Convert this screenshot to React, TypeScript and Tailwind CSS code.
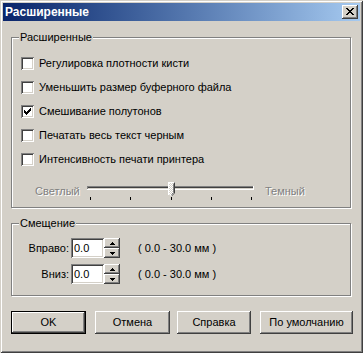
import React from "react";

const RAISED =
  "shadow-[inset_-1px_-1px_#404040,inset_1px_1px_#ffffff,inset_-2px_-2px_#808080,inset_2px_2px_#d4d0c8]";

function Check({ checked }: { checked?: boolean }) {
  return (
    <div className="relative w-[13px] h-[13px] shrink-0 bg-white shadow-[inset_1px_1px_#808080,inset_-1px_-1px_#ffffff,inset_2px_2px_#404040,inset_-2px_-2px_#d4d0c8]">
      {checked && (
        <svg
          className="absolute left-[3px] top-[3px]"
          width="7"
          height="7"
          viewBox="0 0 7 7"
          shapeRendering="crispEdges"
        >
          <path
            d="M0 2h1v3H0z M1 3h1v3H1z M2 4h1v3H2z M3 3h1v3H3z M4 2h1v3H4z M5 1h1v3H5z M6 0h1v3H6z"
            fill="#000"
          />
        </svg>
      )}
    </div>
  );
}

function Row({ text, checked }: { text: string; checked?: boolean }) {
  return (
    <div className="flex items-center h-[13px] gap-[5px]">
      <Check checked={checked} />
      <span className="whitespace-nowrap">{text}</span>
    </div>
  );
}

function Slider() {
  const ticks = [3, 43, 84, 124, 164];
  return (
    <svg width="170" height="22" viewBox="0 0 170 22" shapeRendering="crispEdges">
      <rect x="0" y="6" width="166" height="1" fill="#808080" />
      <rect x="0" y="6" width="1" height="3" fill="#808080" />
      <rect x="1" y="7" width="165" height="1" fill="#404040" />
      <rect x="1" y="8" width="165" height="1" fill="#d4d0c8" />
      <rect x="0" y="9" width="167" height="1" fill="#ffffff" />
      <rect x="166" y="6" width="1" height="4" fill="#ffffff" />
      {ticks.map((t) => (
        <rect key={t} x={t} y="17" width="1" height="3" fill="#000" />
      ))}
      <defs>
        <pattern id="dith" width="2" height="2" patternUnits="userSpaceOnUse">
          <rect width="2" height="2" fill="#ffffff" />
          <rect x="0" y="0" width="1" height="1" fill="#d4d0c8" />
          <rect x="1" y="1" width="1" height="1" fill="#d4d0c8" />
        </pattern>
      </defs>
      <polygon points="81,2 88,2 88,13 84.5,16.5 81,13" fill="url(#dith)" />
      <polyline points="81.5,15 81.5,2.5 87.5,2.5" fill="none" stroke="#ffffff" strokeWidth="1" />
      <polyline points="87.5,2.5 87.5,13 84.5,16" fill="none" stroke="#404040" strokeWidth="1" shapeRendering="auto" />
      <polyline points="86.5,3.5 86.5,12.5 84.5,14.5" fill="none" stroke="#808080" strokeWidth="1" shapeRendering="auto" />
      <polyline points="81.5,13 84.5,16" fill="none" stroke="#ffffff" strokeWidth="1" shapeRendering="auto" />
    </svg>
  );
}

function Spin({ value }: { value: string }) {
  return (
    <div className="flex h-[20px]">
      <div className="w-[33px] h-[20px] bg-white pl-[3px] flex items-center shadow-[inset_1px_1px_#808080,inset_-1px_-1px_#ffffff,inset_2px_2px_#404040,inset_-2px_-2px_#d4d0c8]">
        {value}
      </div>
      <div className="flex flex-col w-[16px] h-[20px]">
        <div className={`h-[10px] bg-[#d4d0c8] flex items-center justify-center ${RAISED}`}>
          <svg width="5" height="3" viewBox="0 0 5 3" shapeRendering="crispEdges">
            <path d="M2 0h1v1H2z M1 1h3v1H1z M0 2h5v1H0z" fill="#000" />
          </svg>
        </div>
        <div className={`h-[10px] bg-[#d4d0c8] flex items-center justify-center ${RAISED}`}>
          <svg width="5" height="3" viewBox="0 0 5 3" shapeRendering="crispEdges">
            <path d="M0 0h5v1H0z M1 1h3v1H1z M2 2h1v1H2z" fill="#000" />
          </svg>
        </div>
      </div>
    </div>
  );
}

function Btn({ children, className }: { children: React.ReactNode; className?: string }) {
  return (
    <div className={`h-[23px] bg-[#d4d0c8] flex items-center justify-center ${RAISED} ${className ?? ""}`}>
      {children}
    </div>
  );
}

export default function App() {
  return (
    <div className="w-[363px] h-[353px] bg-[#d4d0c8] p-[3px] flex flex-col text-[11px] leading-[13px] text-black font-['Liberation_Sans',Arial,sans-serif] shadow-[inset_1px_1px_#d4d0c8,inset_-1px_-1px_#404040,inset_2px_2px_#ffffff,inset_-2px_-2px_#808080]">
      {/* Title bar */}
      <div className="h-[18px] shrink-0 flex items-center justify-between pl-[2px] pr-[2px] bg-linear-to-r from-[#0a246a] to-[#a6caf0]">
        <span className="text-white font-bold text-[12px] leading-[14px]">Расширенные</span>
        <div className={`w-[16px] h-[14px] bg-[#d4d0c8] pl-[4px] pt-[3px] ${RAISED}`}>
          <svg width="8" height="7" viewBox="0 0 8 7" shapeRendering="crispEdges" className="block">
            <path
              d="M0 0h2v1H0z M6 0h2v1H6z M1 1h2v1H1z M5 1h2v1H5z M2 2h4v1H2z M3 3h2v1H3z M2 4h4v1H2z M1 5h2v1H1z M5 5h2v1H5z M0 6h2v1H0z M6 6h2v1H6z"
              fill="#000"
            />
          </svg>
        </div>
      </div>

      {/* Group 1 */}
      <div className="relative shrink-0 mt-[16px] ml-[8px] w-[340px] h-[171px] border border-[#808080] shadow-[inset_1px_1px_#ffffff,1px_1px_#ffffff] pl-[9px] pt-[19px]">
        <span className="absolute left-[7px] top-[-7px] px-[1px] bg-[#d4d0c8]">Расширенные</span>
        <div className="flex flex-col gap-[11px]">
          <Row text="Регулировка плотности кисти" />
          <Row text="Уменьшить размер буферного файла" />
          <Row text="Смешивание полутонов" checked />
          <Row text="Печатать весь текст черным" />
          <Row text="Интенсивность печати принтера" />
        </div>
        <div className="flex items-center mt-[14px] ml-[14px]">
          <span className="w-[52px] text-[#808080] [text-shadow:1px_1px_0_#ffffff]">Светлый</span>
          <Slider />
          <span className="ml-[8px] text-[#808080] [text-shadow:1px_1px_0_#ffffff]">Темный</span>
        </div>
      </div>

      {/* Group 2 */}
      <div className="relative shrink-0 mt-[15px] ml-[8px] w-[340px] h-[73px] border border-[#808080] shadow-[inset_1px_1px_#ffffff,1px_1px_#ffffff] pl-[12px] pt-[14px] flex flex-col gap-[6px]">
        <span className="absolute left-[7px] top-[-7px] px-[1px] bg-[#d4d0c8]">Смещение</span>
        <div className="flex items-center h-[20px]">
          <span className="w-[45px] text-right">Вправо:</span>
          <div className="ml-[2px]">
            <Spin value="0.0" />
          </div>
          <span className="ml-[18px]">( 0.0 - 30.0 мм )</span>
        </div>
        <div className="flex items-center h-[20px]">
          <span className="w-[45px] text-right">Вниз:</span>
          <div className="ml-[2px]">
            <Spin value="0.0" />
          </div>
          <span className="ml-[18px]">( 0.0 - 30.0 мм )</span>
        </div>
      </div>

      {/* Buttons */}
      <div className="flex shrink-0 mt-[15px] ml-[8px]">
        <Btn className="w-[75px] border border-black">OK</Btn>
        <Btn className="w-[75px] ml-[9px]">Отмена</Btn>
        <Btn className="w-[74px] ml-[7px]">Справка</Btn>
        <Btn className="w-[93px] ml-[9px]">По умолчанию</Btn>
      </div>
    </div>
  );
}
